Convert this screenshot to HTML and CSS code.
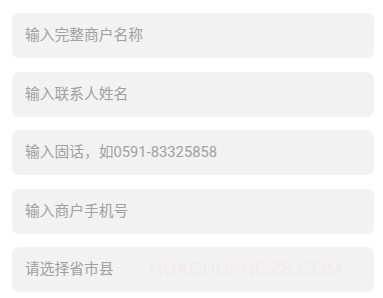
FILE: index.html
```html
<!DOCTYPE html>
<html lang="zh-CN">
<head>
<meta charset="utf-8">
<title>商户信息</title>
<link rel="stylesheet" href="styles.css">
</head>
<body>
<main class="form">
  <div class="field">输入完整商户名称</div>
  <div class="field">输入联系人姓名</div>
  <div class="field">输入固话，如0591-83325858</div>
  <div class="field">输入商户手机号</div>
  <div class="field">请选择省市县</div>
  <div class="watermark">· HUACHUANGZS.COM</div>
</main>
</body>
</html>
```

FILE: styles.css
```css
html, body {
  margin: 0;
  padding: 0;
  background: #ffffff;
}

.form {
  position: relative;
  display: flex;
  flex-direction: column;
  gap: 13.5px;
  padding: 13px 9px 0 12px;
  font-family: Roboto, "Noto Sans CJK SC", sans-serif;
}

.field {
  height: 45px;
  box-sizing: border-box;
  padding-left: 13px;
  display: flex;
  align-items: center;
  background: #f2f2f2;
  border-radius: 7px;
  color: #a0a0a0;
  font-size: 14.75px;
  line-height: 1;
}

.watermark {
  position: absolute;
  left: 138px;
  top: 259px;
  font-family: "Liberation Sans", Arial, sans-serif;
  font-size: 18px;
  color: #f5e8f1;
  letter-spacing: 0.4px;
  pointer-events: none;
}
```
